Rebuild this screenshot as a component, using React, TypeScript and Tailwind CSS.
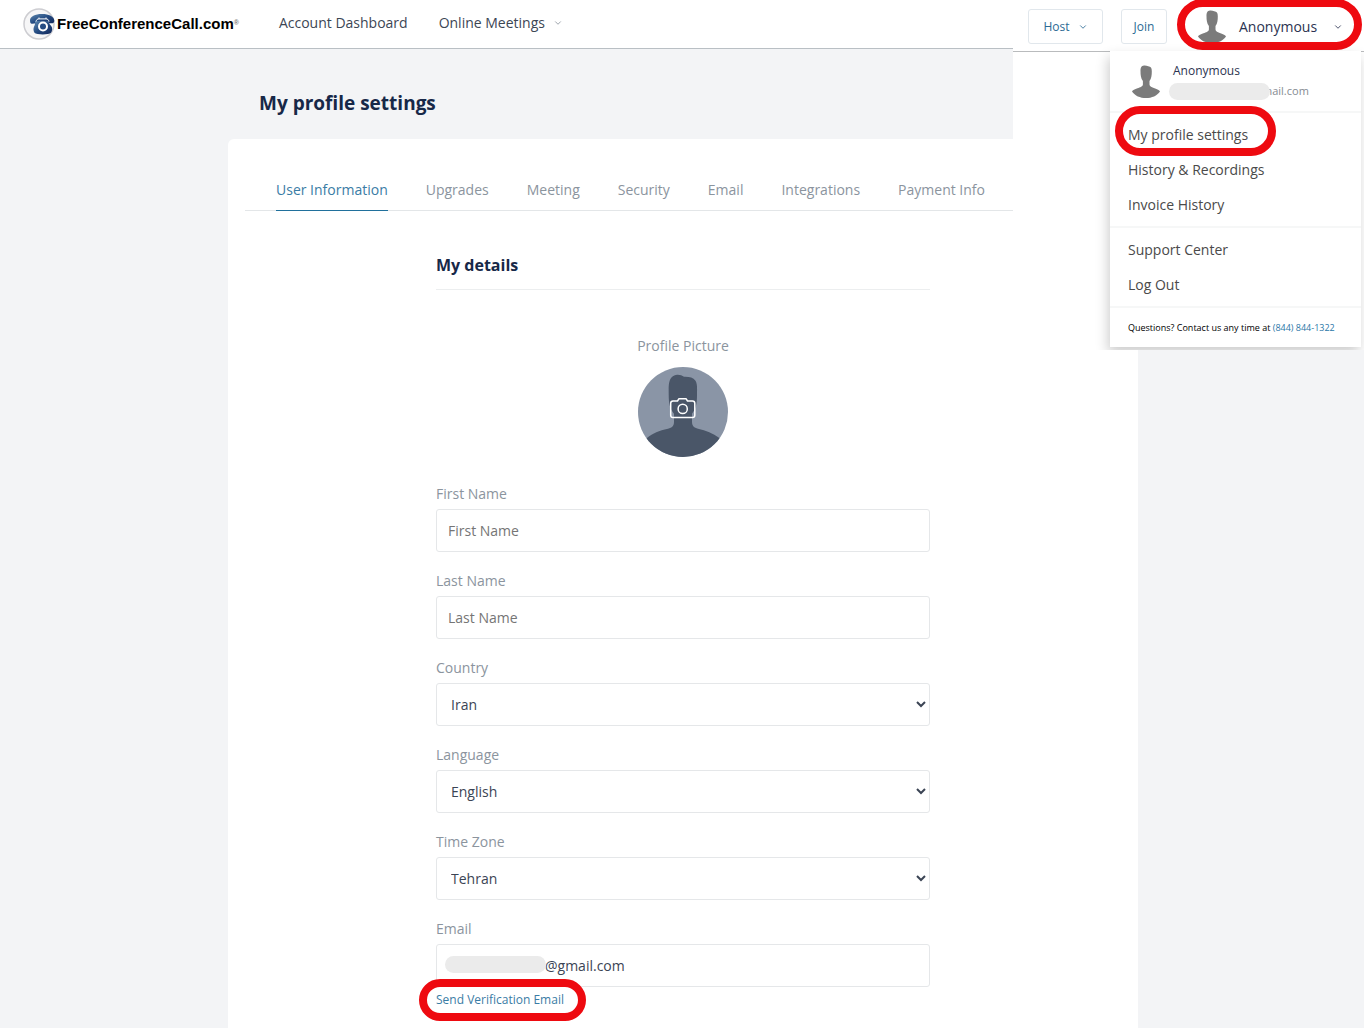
import React, { ReactNode } from "react";
import { ChevronDown } from "lucide-react";

const TABS = [
  "User Information",
  "Upgrades",
  "Meeting",
  "Security",
  "Email",
  "Integrations",
  "Payment Info",
];

const Silhouette = ({ className }: { className?: string }) => (
  <svg viewBox="0 0 28 33" className={className} aria-hidden="true">
    <path
      fill="#7b7b7b"
      d="M12 .5C9.2.8 8.5 3 8.5 6.2c0 4 .4 7 2.4 9.8v3.4c0 2-2.8 2.8-5.4 3.8C2.8 24.2.6 25.2 0 26.4 3 30.6 8 33 14 33s11-2.4 14-6.6c-.6-1.2-2.8-2.2-5.5-3.2-2.6-1-5-1.8-5-3.8V16c2-2.8 2.3-5.8 2.3-9.8 0-3.200-1-4.700-3.600-4.900C15 .6 13.5.4 12 .5Z"
    />
  </svg>
);

const Logo = () => (
  <svg viewBox="0 0 32 32" className="size-8" aria-hidden="true">
    <defs>
      <linearGradient id="phone" x1="0" y1="0" x2="1" y2="1">
        <stop offset="0" stopColor="#5f88ae" />
        <stop offset="0.5" stopColor="#244b82" />
        <stop offset="1" stopColor="#12285a" />
      </linearGradient>
    </defs>
    <circle cx="16" cy="16" r="15" fill="#f6f6f7" stroke="#cdcdd1" strokeWidth="1.5" />
    <path
      fill="url(#phone)"
      d="M7 12.5C7 8.5 12 6 19 6s12 2.500 12.300 6.500c.1 1.500-.6 2.600-1.800 2.700l-2.600.1c-1 0-1.500-.8-1.600-2.300H13c0 1.500-.6 2.500-1.600 2.600l-2.400.2C7.700 15.900 7 14.500 7 12.500Z"
    />
    <path
      fill="url(#phone)"
      d="M12 13h13.500c.3 2.600 1.800 4 3 5.500 1 1.300.9 4.500-.5 6.200-2 2.300-14.500 2.300-16.500 0-1.300-1.600-1.300-4.700-.4-6.200 1-1.500 1-3 .9-5.500Z"
    />
    <path
      fill="none"
      stroke="#fff"
      strokeWidth="1"
      d="M13 13.500c.5-2 1.500-2.600 3-2.600V9.500M26 13.500c-.5-2-1.500-2.600-3-2.600V9.500M16 10.900h7"
    />
    <circle cx="20" cy="18.500" r="4" fill="#244b82" stroke="#fff" strokeWidth="2" />
  </svg>
);

const ProfilePicture = () => (
  <svg viewBox="0 0 90 90" className="size-[90px]" aria-hidden="true">
    <defs>
      <clipPath id="round">
        <circle cx="45" cy="45" r="45" />
      </clipPath>
    </defs>
    <g clipPath="url(#round)">
      <rect width="90" height="90" fill="#8a95a6" />
      <path
        fill="#4a5668"
        d="M39 7.700c3-.2 5 .8 7 2 5-.2 9 .6 11.500 4 2 3 1.500 8 1.500 14 0 9-1 14-5 19v8c0 4 2 6 6 7 8 1.500 15 4.500 21 9l9 8v20H0V79l9-8c6-5 12-7.500 21-9.300 4-1 6-3 6-7v-8c-4-5-5.300-10-5.300-19 0-6-.4-11 1.300-15 1.300-3 4-4.800 7-5Z"
      />
    </g>
    <g fill="none" stroke="#fff" strokeWidth="1.5" strokeLinejoin="round">
      <path d="M35 34h4.500l1.500-2.300h7L49.500 34H54.500a2.300 2.300 0 0 1 2.300 2.300v11.900a2.300 2.300 0 0 1-2.300 2.300H35a2.300 2.300 0 0 1-2.300-2.300V36.300A2.300 2.300 0 0 1 35 34Z" />
      <circle cx="44.700" cy="41.900" r="4.600" />
    </g>
  </svg>
);

// Red pill drawn round whatever it is placed in
const Ring = ({ className }: { className: string }) => (
  <span
    className={`pointer-events-none absolute rounded-full border-8 border-[#ee0a10] ${className}`}
  />
);

type FieldTypes = {
  id: string;
  label: string;
  children: ReactNode;
};

const Field = ({ id, label, children }: FieldTypes) => (
  <div className="flex flex-col gap-[5px]">
    <label htmlFor={id} className="self-start text-sm text-[#8b949e]">
      {label}
    </label>
    {children}
  </div>
);

const INPUT_STYLE =
  "h-[43px] w-full rounded-[3px] border border-[#e5e7e9] bg-white px-[11px] text-sm text-[#3b4454] placeholder:text-[#757575]";
const SELECT_STYLE =
  "h-[43px] w-full rounded-[3px] border border-[#e5e7e9] bg-white pl-2.5 text-sm text-[#3b4454]";

const MenuLink = ({ children }: { children: ReactNode }) => (
  <a href="#" className="flex h-[35px] items-center px-[18px]">
    {children}
  </a>
);

const AccountPanel = () => (
  <div className="absolute top-0 right-0 flex h-[350px] w-[351px] flex-col overflow-hidden bg-white">
    <div className="flex h-[52px] shrink-0 items-center border-b border-[#b9bbbd] pt-0.5 pl-[15px]">
      <button className="flex h-[35px] w-[75px] items-center justify-center gap-2 rounded-[3px] border border-[#e1e7ec] text-xs text-[#2b6a94]">
        Host <ChevronDown className="size-2.5" />
      </button>
      <button className="ml-[18px] h-[35px] w-[46px] rounded-[3px] border border-[#e1e7ec] text-xs text-[#2b6a94]">
        Join
      </button>
      <button className="relative ml-2.5 flex h-full w-[185px] items-center pl-5 text-sm text-[#2b3350]">
        <Silhouette className="h-[33px] w-[30px]" />
        <span className="ml-3">Anonymous</span>
        <ChevronDown className="ml-4 size-2.5" />
        <Ring className="inset-x-0 -top-[3px] bottom-px" />
      </button>
    </div>

    <div className="relative -mt-px mr-[3px] ml-[97px] h-[296px] bg-white text-sm text-[#4a4a4a] shadow-[-2px_6px_12px_rgba(0,0,0,0.2)]">
      <div className="flex h-[60px] items-center gap-2 pl-[21px]">
        <Silhouette className="h-[33px] w-[30px]" />
        <div>
          <div className="pl-1 text-xs leading-5 text-[#2b3350]">Anonymous</div>
          <div className="flex h-5 items-center text-[11px] text-[#858b92]">
            <span className="z-10 h-[17px] w-[101px] rounded-full bg-[#ebebeb]" />
            <span className="-ml-2">mail.com</span>
          </div>
        </div>
      </div>
      <div className="relative border-t-2 border-[#f6f7f7] py-1">
        <MenuLink>My profile settings</MenuLink>
        <MenuLink>History &amp; Recordings</MenuLink>
        <MenuLink>Invoice History</MenuLink>
        <Ring className="-top-[7px] left-[5px] h-[50px] w-[161px]" />
      </div>
      <div className="border-t-2 border-[#f6f7f7] py-1">
        <MenuLink>Support Center</MenuLink>
        <MenuLink>Log Out</MenuLink>
      </div>
      <p className="border-t-2 border-[#f6f7f7] px-[18px] py-2.5 text-[9px] leading-5 whitespace-nowrap text-black">
        Questions? Contact us any time at{" "}
        <a href="#" className="text-[#2b77a8]">
          (844) 844-1322
        </a>
      </p>
    </div>
  </div>
);

const App = () => {
  return (
    <div className="relative flex min-h-screen flex-col bg-[#f3f4f6] font-['Open_Sans',sans-serif]">
      <header className="flex h-[49px] items-center border-b border-[#b9bfc4] bg-white pl-[23px]">
        <a href="#" className="flex items-center gap-0.5">
          <Logo />
          <span className="font-['Liberation_Sans',sans-serif] text-[15px] font-bold text-black">
            FreeConferenceCall.com
            <sup className="text-[7px] text-[#777]">®</sup>
          </span>
        </a>
        <nav className="ml-10 flex items-center gap-[31px] pb-0.5 text-sm text-[#3c4654]">
          <a href="#">Account Dashboard</a>
          <a href="#" className="flex items-center gap-2">
            Online Meetings <ChevronDown className="size-2.5 text-[#8b949e]" />
          </a>
        </nav>
      </header>

      <div className="flex flex-1 pl-0.5">
        <main className="mx-auto flex w-full max-w-[910px] flex-col">
          <h1 className="px-[31px] pt-10 pb-[22px] text-[19px] leading-7 font-bold text-[#172848]">
            My profile settings
          </h1>

          <section className="flex-1 rounded-t-md bg-white px-[17px] pt-[41px]">
            <nav className="flex gap-[38px] border-b border-[#e3e6e8] pl-[31px] text-sm text-[#8b949e]">
              {TABS.map((tab, index) => (
                <a
                  key={tab}
                  href="#"
                  className={
                    index === 0
                      ? "-mb-px border-b border-[#20709c] pb-2.5 text-[#3a7ca5]"
                      : "pb-2.5"
                  }
                >
                  {tab}
                </a>
              ))}
            </nav>

            <div className="mx-auto w-full max-w-[494px] pt-[42px]">
              <h2 className="border-b border-[#eceeef] pb-3 text-base font-bold text-[#172848]">
                My details
              </h2>

              <div className="flex flex-col items-center gap-[11px] pt-[46px] pb-[27px]">
                <span className="text-sm text-[#8b949e]">Profile Picture</span>
                <button aria-label="Change profile picture">
                  <ProfilePicture />
                </button>
              </div>

              <form className="flex flex-col gap-[19px]">
                <Field id="first-name" label="First Name">
                  <input id="first-name" placeholder="First Name" className={INPUT_STYLE} />
                </Field>
                <Field id="last-name" label="Last Name">
                  <input id="last-name" placeholder="Last Name" className={INPUT_STYLE} />
                </Field>
                <Field id="country" label="Country">
                  <select id="country" className={SELECT_STYLE}>
                    <option>Iran</option>
                  </select>
                </Field>
                <Field id="language" label="Language">
                  <select id="language" className={SELECT_STYLE}>
                    <option>English</option>
                  </select>
                </Field>
                <Field id="time-zone" label="Time Zone">
                  <select id="time-zone" className={SELECT_STYLE}>
                    <option>Tehran</option>
                  </select>
                </Field>
                <Field id="email" label="Email">
                  <div className="relative">
                    <input
                      id="email"
                      defaultValue="@gmail.com"
                      className="h-[43px] w-full rounded-[3px] border border-[#e5e7e9] bg-white pl-[108px] text-sm text-[#3b4454]"
                    />
                    <span className="absolute top-3 left-[9px] h-[17px] w-[101px] rounded-full bg-[#ebebeb]" />
                  </div>
                  <div className="relative self-start">
                    <button type="button" className="block text-xs text-[#3a7ca5]">
                      Send Verification Email
                    </button>
                    <Ring className="-inset-y-[13px] -right-[22px] -left-[17px]" />
                  </div>
                </Field>
              </form>
            </div>
          </section>
        </main>
      </div>

      <AccountPanel />
    </div>
  );
};

export default App;
